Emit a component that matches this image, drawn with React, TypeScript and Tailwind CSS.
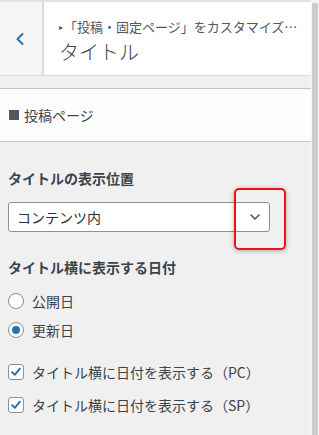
import React from "react"

const jp = { fontFamily: '"Noto Sans CJK JP", "Noto Sans", sans-serif' }

function Radio({ checked, label }: { checked?: boolean; label: string }) {
    return (
        <label className="flex items-center h-[20px] gap-[8px]">
            <span className="w-[16px] h-[16px] rounded-full border border-[#8c8f94] bg-white flex items-center justify-center">
                {checked && <span className="w-[8px] h-[8px] rounded-full bg-[#2271b1]" />}
            </span>
            <span className="text-[14px] text-[#3c434a]">{label}</span>
        </label>
    )
}

function Check({ label }: { label: string }) {
    return (
        <label className="flex items-center h-[20px] gap-[8px]">
            <span className="w-[16px] h-[16px] rounded-[3px] border border-[#8c8f94] bg-white flex items-center justify-center">
                <svg viewBox="0 0 16 16" className="w-[14px] h-[14px]">
                    <path d="M3.5 8.2 L6.6 11.2 L12.5 4.2" fill="none" stroke="#2271b1" strokeWidth="2.2" strokeLinecap="round" strokeLinejoin="round" />
                </svg>
            </span>
            <span className="text-[14px] text-[#3c434a]">{label}</span>
        </label>
    )
}

export default function App() {
    return (
        <div className="w-[319px] h-[435px] overflow-hidden flex bg-white" style={jp}>
            <div className="flex-1 flex flex-col bg-[#f0f0f1]">
                <div className="h-[2px] bg-[#e2e2e2]" />
                {/* Header */}
                <div className="h-[74px] flex border-b border-[#dcdcde] bg-white">
                    <div className="w-[44px] bg-[#f3f5f6] border-r-2 border-[#dcdcde] flex items-center justify-center">
                        <svg viewBox="0 0 12 16" className="w-[10px] h-[14px] mr-[2px] mt-[1px]">
                            <path d="M9 2 L3 8 L9 14" fill="none" stroke="#2271b1" strokeWidth="2.4" strokeLinecap="round" strokeLinejoin="round" />
                        </svg>
                    </div>
                    <div className="flex-1 pl-[15px] pt-[14px]">
                        <div className="flex items-center text-[13px] text-[#50575e] leading-[20px] whitespace-nowrap">
                            <span className="text-[8px] mr-[1px] mt-[1px]">▸</span>
                            <span>「投稿・固定ページ」をカスタマイズ…</span>
                        </div>
                        <div className="text-[20px] font-light text-[#3c434a] leading-[28px] mt-[1px]">タイトル</div>
                    </div>
                </div>
                <div className="h-[12px]" />
                {/* Section title */}
                <div className="h-[54px] border-y border-[#c3c4c7] bg-[#fdfdfd] flex items-center pl-[9px] text-[14px] text-[#3c434a]">
                    <span className="w-[10px] h-[10px] bg-[#50575e] mr-[5px]" />
                    <span>投稿ページ</span>
                </div>
                {/* Body */}
                <div className="px-[8px] pt-[26px]">
                    <div className="text-[14px] font-bold text-[#3c434a] leading-[20px]">タイトルの表示位置</div>
                    <div className="relative mt-[14px] w-[262px]">
                        <div className="h-[30px] rounded-[3px] border border-[#8c8f94] bg-white flex items-center justify-between pl-[8px] pr-[9px] text-[14px] text-[#2c3338]">
                            <span>コンテンツ内</span>
                            <svg viewBox="0 0 10 6" className="w-[10px] h-[6px]">
                                <path d="M1 1 L5 5 L9 1" fill="none" stroke="#50575e" strokeWidth="1.6" strokeLinecap="round" strokeLinejoin="round" />
                            </svg>
                        </div>
                        <div className="absolute left-[226px] top-[-14px] w-[52px] h-[62px] rounded-[5px] border-2 border-[#ee1111] shadow-[0_1px_5px_rgba(0,0,0,0.3)]" />
                    </div>
                    <div className="mt-[25px] text-[14px] font-bold text-[#3c434a] leading-[20px]">タイトル横に表示する日付</div>
                    <div className="mt-[14px] flex flex-col gap-[9px]">
                        <Radio label="公開日" />
                        <Radio checked label="更新日" />
                    </div>
                    <div className="mt-[22px] flex flex-col gap-[13px]">
                        <Check label="タイトル横に日付を表示する（PC）" />
                        <Check label="タイトル横に日付を表示する（SP）" />
                    </div>
                </div>
            </div>
            {/* Scrollbar */}
            <div className="w-[8px] bg-[#f5f5f5] pt-[3px] px-[1px]">
                <div className="h-full bg-[#cdcdcd]" />
            </div>
        </div>
    )
}
